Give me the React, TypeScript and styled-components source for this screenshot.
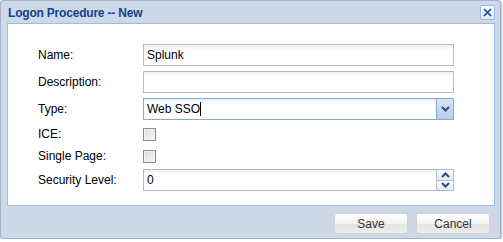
import React from "react";
import styled, { createGlobalStyle } from "styled-components";

const GlobalStyle = createGlobalStyle`
  html, body {
    margin: 0;
    padding: 0;
    background: #ffffff;
  }
  body {
    font-family: "Liberation Sans", Arial, sans-serif;
    font-size: 12px;
  }
`;

const Window = styled.div`
  width: 499px;
  height: 237px;
  border: 1px solid #a3b4c8;
  border-radius: 3px;
  background: #ced9e7;
  box-shadow: 1px 1px 2px rgba(0, 0, 0, 0.25);
  display: flex;
  flex-direction: column;
`;

const Header = styled.div`
  height: 22px;
  display: flex;
  align-items: center;
  justify-content: space-between;
  padding: 0 5px 0 7px;
`;

const Title = styled.span`
  font-weight: bold;
  font-size: 12px;
  color: #15428b;
  letter-spacing: -0.2px;
  margin-top: 1px;
`;

const CloseButton = styled.button`
  width: 15px;
  height: 15px;
  padding: 0;
  border: 1px solid #99bbe8;
  border-radius: 2px;
  background: linear-gradient(#fbfdff, #dde8f5);
  display: flex;
  align-items: center;
  justify-content: center;
  margin-top: 1px;
`;

const Body = styled.div`
  margin: 0 5px 0 6px;
  height: 181px;
  border: 1px solid #99bbe8;
  background: #ffffff;
  padding: 20px 40px 0 30px;
  display: flex;
  flex-direction: column;
  gap: 5px;
  box-sizing: border-box;
  height: 183px;
`;

const Row = styled.div<{ $h: number }>`
  display: flex;
  align-items: center;
  height: ${(p) => p.$h}px;
`;

const Label = styled.label`
  width: 105px;
  flex: none;
  color: #000;
`;

const FieldBox = styled.div<{ $focus?: boolean }>`
  width: 312px;
  height: 22px;
  box-sizing: border-box;
  border: 1px solid ${(p) => (p.$focus ? "#7eadd9" : "#b5b8c8")};
  background: linear-gradient(#eceff3 0px, #ffffff 5px, #ffffff);
  display: flex;
  align-items: stretch;
`;

const FieldText = styled.div`
  flex: 1;
  display: flex;
  align-items: center;
  padding-left: 3px;
  font-size: 12px;
  color: #000;
`;

const Caret = styled.span`
  display: inline-block;
  width: 1px;
  height: 14px;
  background: #000;
`;

const Trigger = styled.div`
  width: 16px;
  border-left: 1px solid #7eadd9;
  background: linear-gradient(#d6e3f3, #b9cfeb);
  display: flex;
  align-items: center;
  justify-content: center;
`;

const Spinner = styled.div`
  width: 16px;
  border-left: 1px solid #b5b8c8;
  display: flex;
  flex-direction: column;
`;

const SpinHalf = styled.div<{ $top?: boolean }>`
  flex: 1;
  background: linear-gradient(#fbfcfe, #e4e9f0);
  border-bottom: ${(p) => (p.$top ? "1px solid #b5b8c8" : "none")};
  display: flex;
  align-items: center;
  justify-content: center;
`;

const Check = styled.span`
  width: 11px;
  height: 11px;
  border: 1px solid #8c8c8c;
  background: linear-gradient(135deg, #dcdcdc, #f8f8f8);
  box-shadow: inset 0 0 0 1px #f2f2f2;
  margin-top: 2px;
`;

const Footer = styled.div`
  flex: 1;
  display: flex;
  justify-content: flex-end;
  align-items: flex-start;
  gap: 8px;
  padding: 7px 10px 0 0;
`;

const Button = styled.button`
  width: 74px;
  height: 21px;
  border: 1px solid #d0d3d8;
  border-radius: 3px;
  background: linear-gradient(#ffffff 0%, #f3f3f3 50%, #e4e4e4 51%, #ececec 100%);
  font-family: "Liberation Sans", Arial, sans-serif;
  font-size: 12px;
  color: #333;
  padding: 0;
`;

const Chevron = ({ up, color }: { up?: boolean; color: string }) => (
  <svg width="9" height="6" viewBox="0 0 9 6">
    <path
      d={up ? "M1 5 L4.5 1.5 L8 5" : "M1 1 L4.5 4.5 L8 1"}
      fill="none"
      stroke={color}
      strokeWidth="2"
    />
  </svg>
);

export default function App() {
  return (
    <>
      <GlobalStyle />
      <Window>
        <Header>
          <Title>Logon Procedure -- New</Title>
          <CloseButton>
            <svg width="9" height="9" viewBox="0 0 9 9">
              <path d="M1 1 L8 8 M8 1 L1 8" stroke="#15428b" strokeWidth="1.6" />
            </svg>
          </CloseButton>
        </Header>
        <Body>
          <Row $h={22}>
            <Label>Name:</Label>
            <FieldBox>
              <FieldText>Splunk</FieldText>
            </FieldBox>
          </Row>
          <Row $h={22}>
            <Label>Description:</Label>
            <FieldBox>
              <FieldText />
            </FieldBox>
          </Row>
          <Row $h={22}>
            <Label>Type:</Label>
            <FieldBox $focus>
              <FieldText>
                Web SSO<Caret />
              </FieldText>
              <Trigger>
                <Chevron color="#2a4b7c" />
              </Trigger>
            </FieldBox>
          </Row>
          <Row $h={17}>
            <Label>ICE:</Label>
            <Check />
          </Row>
          <Row $h={17}>
            <Label>Single Page:</Label>
            <Check />
          </Row>
          <Row $h={22}>
            <Label>Security Level:</Label>
            <FieldBox>
              <FieldText>0</FieldText>
              <Spinner>
                <SpinHalf $top>
                  <Chevron up color="#2a4b7c" />
                </SpinHalf>
                <SpinHalf>
                  <Chevron color="#2a4b7c" />
                </SpinHalf>
              </Spinner>
            </FieldBox>
          </Row>
        </Body>
        <Footer>
          <Button>Save</Button>
          <Button>Cancel</Button>
        </Footer>
      </Window>
    </>
  );
}
